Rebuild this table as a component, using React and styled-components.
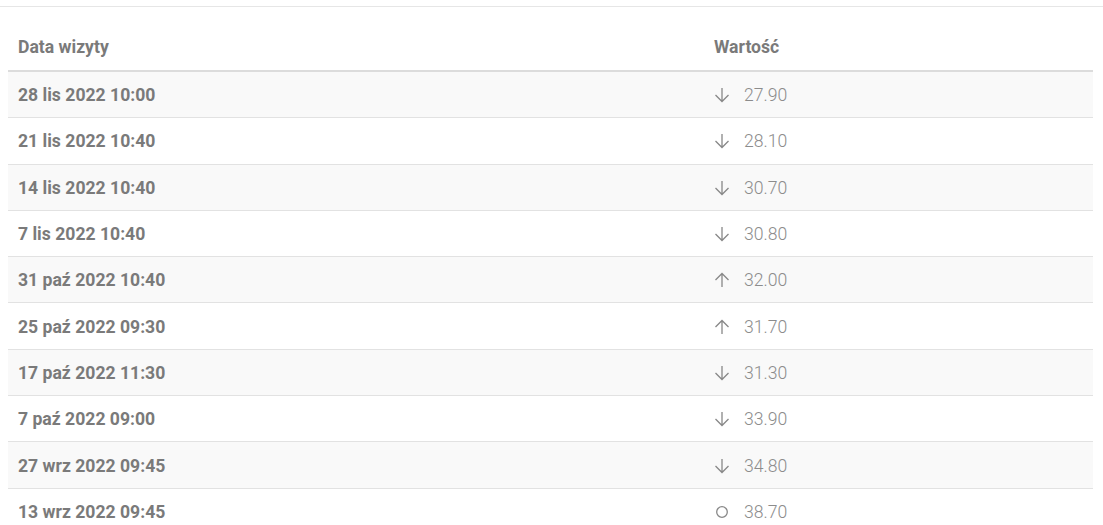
import styled, { createGlobalStyle } from "styled-components";

const visits = [
  { date: "28 lis 2022 10:00", trend: "down", value: "27.90" },
  { date: "21 lis 2022 10:40", trend: "down", value: "28.10" },
  { date: "14 lis 2022 10:40", trend: "down", value: "30.70" },
  { date: "7 lis 2022 10:40", trend: "down", value: "30.80" },
  { date: "31 paź 2022 10:40", trend: "up", value: "32.00" },
  { date: "25 paź 2022 09:30", trend: "up", value: "31.70" },
  { date: "17 paź 2022 11:30", trend: "down", value: "31.30" },
  { date: "7 paź 2022 09:00", trend: "down", value: "33.90" },
  { date: "27 wrz 2022 09:45", trend: "down", value: "34.80" },
  { date: "13 wrz 2022 09:45", trend: "none", value: "38.70" },
];

function TrendIcon({ trend }) {
  if (trend === "none") {
    return (
      <StyledIcon viewBox="0 0 16 16">
        <circle cx="8" cy="8" r="5.3" />
      </StyledIcon>
    );
  }
  const d =
    trend === "up" ? "M8 1.5V15 M1.5 8L8 1.5L14.5 8" : "M8 1V14.5 M1.5 8L8 14.5L14.5 8";
  return (
    <StyledIcon viewBox="0 0 16 16">
      <path d={d} />
    </StyledIcon>
  );
}

export default function App() {
  return (
    <>
      <GlobalStyle />
      <StyledTopRule />
      <StyledTable>
        <StyledHeader>
          <StyledHeadCell>Data wizyty</StyledHeadCell>
          <StyledHeadCell>Wartość</StyledHeadCell>
        </StyledHeader>
        {visits.map((visit, i) => (
          <StyledRow key={visit.date} $striped={i % 2 === 0}>
            <StyledDate>{visit.date}</StyledDate>
            <StyledValue>
              <TrendIcon trend={visit.trend} />
              {visit.value}
            </StyledValue>
          </StyledRow>
        ))}
      </StyledTable>
    </>
  );
}

const GlobalStyle = createGlobalStyle`
  body {
    margin: 0;
    background: #fff;
    font-family: Roboto, "Liberation Sans", sans-serif;
    overflow: hidden;
  }
`;

const StyledTopRule = styled.div`
  margin-top: 6px;
  border-top: 1px solid #e6e6e6;
`;

const StyledTable = styled.div`
  margin: 16px 10px 0 8px;
`;

const StyledHeader = styled.div`
  display: grid;
  grid-template-columns: 696px 1fr;
  border-bottom: 2px solid #dcdcdc;
`;

const StyledHeadCell = styled.div`
  padding: 12px 10px 11px;
  line-height: 24px;
  font-size: 17.6px;
  font-weight: 700;
  color: #7a7a7a;
`;

const StyledRow = styled.div`
  display: grid;
  grid-template-columns: 696px 1fr;
  align-items: center;
  height: 45.3px;
  border-bottom: 1px solid #e2e2e2;
  background: ${(props) => (props.$striped ? "#f9f9f9" : "#fff")};
`;

const StyledDate = styled.div`
  padding: 1px 10px 0;
  font-size: 17.6px;
  font-weight: 700;
  color: #7a7a7a;
`;

const StyledValue = styled.div`
  display: flex;
  align-items: center;
  gap: 14px;
  padding: 1px 10px 0;
  font-size: 17.6px;
  font-weight: 300;
  color: #8c8c8c;
`;

const StyledIcon = styled.svg`
  width: 16px;
  height: 16px;
  fill: none;
  stroke: #888;
  stroke-width: 1.3;
`;
